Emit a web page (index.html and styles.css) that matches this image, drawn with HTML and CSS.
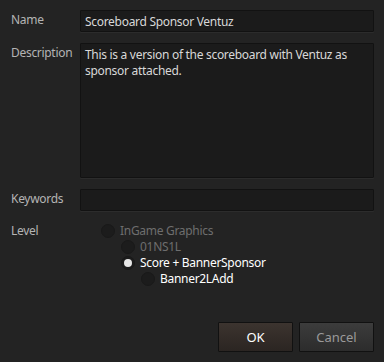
FILE: index.html
```html
<!DOCTYPE html>
<html>
<head>
  <meta charset="utf-8">
  <title>Template Properties</title>
  <link rel="stylesheet" href="styles.css">
</head>
<body>
  <main class="dialog">
    <form class="form">
      <label class="label">Name</label>
      <input class="field" type="text" value="Scoreboard Sponsor Ventuz">

      <label class="label">Description</label>
      <textarea class="field area">This is a version of the scoreboard with Ventuz as sponsor attached.</textarea>

      <label class="label">Keywords</label>
      <input class="field" type="text" value="">

      <label class="label level-label">Level</label>
      <ul class="tree">
        <li>
          <div class="node disabled"><span class="radio"></span>InGame Graphics</div>
          <ul>
            <li>
              <div class="node disabled"><span class="radio"></span>01NS1L</div>
            </li>
            <li>
              <div class="node"><span class="radio checked"></span>Score + BannerSponsor</div>
              <ul>
                <li>
                  <div class="node"><span class="radio"></span>Banner2LAdd</div>
                </li>
              </ul>
            </li>
          </ul>
        </li>
      </ul>
    </form>
    <div class="buttons">
      <button class="btn ok">OK</button>
      <button class="btn cancel">Cancel</button>
    </div>
  </main>
</body>
</html>
```

FILE: styles.css
```css
html,
body {
  margin: 0;
  padding: 0;
  width: 384px;
  height: 362px;
  overflow: hidden;
  background-color: #232323;
}
body {
  font-family: "Noto Sans", "Open Sans", sans-serif;
  font-size: 12px;
  letter-spacing: -0.3px;
  color: #d8d8d8;
}
.dialog {
  display: flex;
  flex-direction: column;
  height: 362px;
  box-sizing: border-box;
  padding: 10px 10px 10px 11px;
}
.form {
  display: grid;
  grid-template-columns: 69px 1fr;
  row-gap: 11px;
  align-items: start;
}
.label {
  color: #b4b4b4;
  padding-top: 2px;
  line-height: 16px;
}
.field {
  box-sizing: border-box;
  width: 100%;
  height: 22px;
  margin: 0;
  padding: 0 4px;
  font: inherit;
  letter-spacing: inherit;
  line-height: 16px;
  color: #d8d8d8;
  background-color: #1b1b1b;
  border: 1px solid #121212;
  border-radius: 1px;
  box-shadow: 0 1px 0 #2c2c2c;
  outline: none;
}
.area {
  height: 135px;
  padding: 3px 4px;
  resize: none;
  overflow: hidden;
}
.level-label {
  padding-top: 1px;
}
.tree,
.tree ul {
  list-style: none;
  margin: 0;
  padding: 0;
}
.tree {
  margin-left: 21px;
  padding-top: 1px;
}
.tree ul {
  padding-left: 20px;
}
.node {
  display: flex;
  align-items: center;
  height: 16px;
  line-height: 16px;
  color: #ffffff;
}
.node.disabled {
  color: #6e6e6e;
}
.radio {
  box-sizing: border-box;
  width: 14px;
  height: 14px;
  margin-right: 5px;
  border-radius: 50%;
  background-color: #1c1c1c;
  border: 1px solid #191919;
  display: flex;
  align-items: center;
  justify-content: center;
}
.radio.checked::after {
  content: "";
  width: 8px;
  height: 8px;
  border-radius: 50%;
  background-color: #e6e6e6;
}
.buttons {
  margin-top: auto;
  display: flex;
  justify-content: flex-end;
  gap: 6px;
}
.btn {
  width: 75px;
  height: 30px;
  margin: 0;
  padding: 0;
  font: inherit;
  font-size: 13px;
  letter-spacing: 0;
  border: 1px solid #111111;
  border-radius: 1px;
}
.ok {
  color: #ffffff;
  background: linear-gradient(#3c342f, #2b2522);
}
.cancel {
  color: #9a9a9a;
  background: linear-gradient(#3c3c3c, #2c2c2c);
}
```
